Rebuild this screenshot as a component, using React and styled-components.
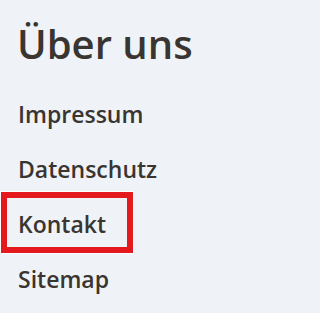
import React from "react";
import styled, { createGlobalStyle } from "styled-components";

const Global = createGlobalStyle`
  html, body { margin: 0; padding: 0; background: #eff3f7; }
  body { font-family: "Open Sans", "Noto Sans", sans-serif; color: #3a3530; }
`;

const Section = styled.nav`
  display: flex;
  flex-direction: column;
  align-items: flex-start;
  padding: 19.5px 0 0 7px;
`;

const Heading = styled.h2`
  margin: 0 0 20.5px 10px;
  font-size: 40px;
  line-height: 48px;
  font-weight: 600;
  color: #3a3530;
`;

const List = styled.ul`
  list-style: none;
  margin: 0;
  padding: 0;
  display: flex;
  flex-direction: column;
  align-items: flex-start;
  gap: 6px;
`;

const Link = styled.a`
  display: inline-block;
  padding: 10px 21px 7px 11px;
  font-size: 23px;
  line-height: 32px;
  font-weight: 600;
  color: #3a3530;
  text-decoration: none;
  box-shadow: ${(p) => (p.$focused ? "0 0 0 6px #e3191e, 0 0 0 7px #ffffff" : "none")};
`;

const items = ["Impressum", "Datenschutz", "Kontakt", "Sitemap"];

export default function App() {
  return (
    <>
      <Global />
      <Section>
        <Heading>Über uns</Heading>
        <List>
          {items.map((t) => (
            <li key={t}>
              <Link href="#" $focused={t === "Kontakt"}>{t}</Link>
            </li>
          ))}
        </List>
      </Section>
    </>
  );
}
